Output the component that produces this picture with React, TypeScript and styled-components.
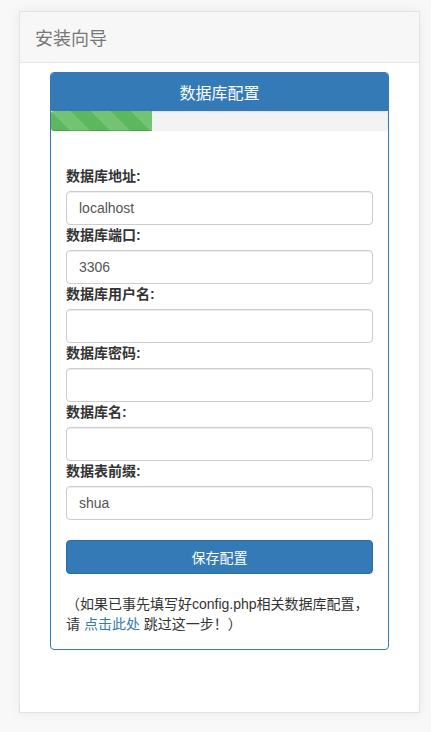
import styled, { createGlobalStyle } from 'styled-components';

const GlobalStyle = createGlobalStyle`
  html, body {
    margin: 0;
    padding: 0;
    background: #f8f8f8;
    font-family: "Liberation Sans", "Noto Sans CJK SC", sans-serif;
    font-size: 14px;
    color: #333;
  }
  * { box-sizing: border-box; }
`;

const Page = styled.div`
  padding: 11px 11px 20px 19px;
`;

const Wizard = styled.div`
  background: #fff;
  border: 1px solid #e3e3e3;
  box-shadow: 0 0 12px rgba(0, 0, 0, 0.06);
  min-height: 702px;
`;

const WizardHeading = styled.div`
  background: #f7f7f7;
  border-bottom: 1px solid #e5e5e5;
  height: 51px;
  padding: 0 15px;
  display: flex;
  align-items: center;
  font-size: 18px;
  color: #777;
`;

const WizardBody = styled.div`
  padding: 9px 30px 20px 30px;
`;

const Panel = styled.div`
  border: 1px solid #337ab7;
  border-radius: 4px;
  overflow: hidden;
`;

const PanelHeading = styled.div`
  background: #337ab7;
  color: #fff;
  font-size: 16px;
  height: 38px;
  display: flex;
  align-items: center;
  justify-content: center;
`;

const Progress = styled.div`
  height: 20px;
  background: #f3f3f3;
  box-shadow: inset 0 1px 2px rgba(0, 0, 0, 0.08);
  border-radius: 3px;
  overflow: hidden;
`;

const ProgressBar = styled.div`
  height: 100%;
  background-color: #5cb85c;
  background-image: linear-gradient(
    45deg,
    rgba(255, 255, 255, 0.15) 25%,
    transparent 25%,
    transparent 50%,
    rgba(255, 255, 255, 0.15) 50%,
    rgba(255, 255, 255, 0.15) 75%,
    transparent 75%,
    transparent
  );
  background-size: 40px 40px;
  box-shadow: inset 0 -1px 0 rgba(0, 0, 0, 0.15);
`;

const PanelBody = styled.div`
  padding: 35px 15px 15px 15px;
`;

const Label = styled.label`
  display: block;
  font-weight: bold;
  line-height: 20px;
  margin-bottom: 5px;
`;

const Input = styled.input`
  display: block;
  width: 100%;
  height: 34px;
  padding: 6px 12px;
  font-family: inherit;
  font-size: 14px;
  color: #555;
  background: #fff;
  border: 1px solid #ccc;
  border-radius: 4px;
  box-shadow: inset 0 1px 1px rgba(0, 0, 0, 0.075);
  outline: none;
`;

const SaveButton = styled.button`
  display: block;
  width: 100%;
  height: 34px;
  margin-top: 20px;
  background: #337ab7;
  border: 1px solid #2e6da4;
  border-radius: 4px;
  color: #fff;
  font-family: inherit;
  font-size: 14px;
  cursor: pointer;
`;

const Note = styled.p`
  margin: 20px 0 0 0;
  line-height: 20px;
  color: #333;
`;

const Link = styled.a`
  color: #337ab7;
  text-decoration: none;
`;

const fields = [
  { label: '数据库地址:', value: 'localhost' },
  { label: '数据库端口:', value: '3306' },
  { label: '数据库用户名:', value: '' },
  { label: '数据库密码:', value: '' },
  { label: '数据库名:', value: '' },
  { label: '数据表前缀:', value: 'shua' },
];

export default function App() {
  return (
    <>
      <GlobalStyle />
      <Page>
        <Wizard>
          <WizardHeading>安装向导</WizardHeading>
          <WizardBody>
            <Panel>
              <PanelHeading>数据库配置</PanelHeading>
              <Progress>
                <ProgressBar style={{ width: '30%' }} />
              </Progress>
              <PanelBody>
                {fields.map((f) => (
                  <div key={f.label}>
                    <Label>{f.label}</Label>
                    <Input defaultValue={f.value} />
                  </div>
                ))}
                <SaveButton>保存配置</SaveButton>
                <Note>
                  （如果已事先填写好config.php相关数据库配置，请 <Link href="#">点击此处</Link> 跳过这一步！）
                </Note>
              </PanelBody>
            </Panel>
          </WizardBody>
        </Wizard>
      </Page>
    </>
  );
}
